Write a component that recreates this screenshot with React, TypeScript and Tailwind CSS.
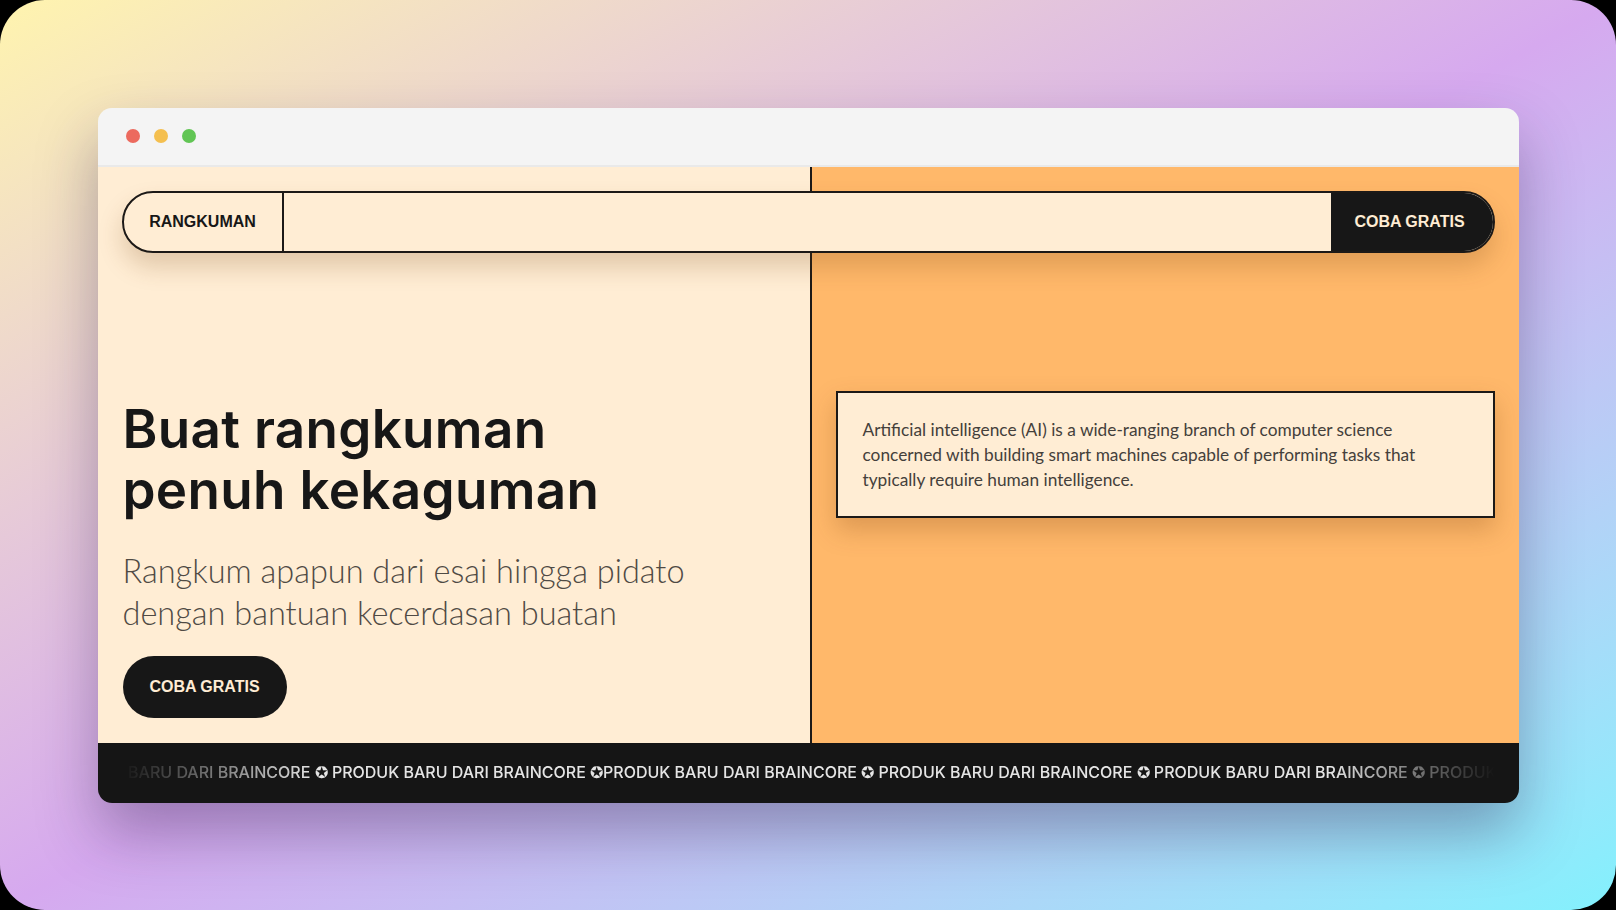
import React from 'react'

const TICKER = 'PRODUK BARU DARI BRAINCORE ✪ PRODUK BARU DARI BRAINCORE ✪PRODUK BARU DARI BRAINCORE ✪ PRODUK BARU DARI BRAINCORE ✪ PRODUK BARU DARI BRAINCORE ✪ PRODUK BARU DARI BRAINCORE ✪ PRODUK BARU DARI BRAINCORE'

const labelFont = "font-['Liberation_Sans',Arial,sans-serif] font-bold text-[16px] uppercase"

const App: React.FC = () => {
	return (
		<div className="w-[1616px] h-[910px] bg-black">
			<div className="w-full h-full rounded-[45px] bg-gradient-to-br from-[#fff4ae] via-[#d6a9ef] to-[#82f1fd] flex items-center justify-center">
				{/* browser window */}
				<div className="w-[1421px] h-[695px] rounded-[14px] overflow-hidden flex flex-col shadow-[0_30px_60px_rgba(40,30,70,0.35)]">
					<div className="h-[59px] shrink-0 bg-[#f4f4f4] border-b-2 border-[#e9e9e9] flex items-center gap-[14px] pl-[28px]">
						<span className="w-[14px] h-[14px] rounded-full bg-[#ec6a5e]" />
						<span className="w-[14px] h-[14px] rounded-full bg-[#f4bf4f]" />
						<span className="w-[14px] h-[14px] rounded-full bg-[#61c554]" />
					</div>

					<div className="relative flex-1 grid grid-cols-[714px_1fr] min-h-0">
						{/* left */}
						<div className="bg-orange-100 border-r-2 border-[#1c1917] flex flex-col justify-end px-[25px] pb-[25px]">
							<h1 className="font-['Inter',sans-serif] font-semibold text-[53px] leading-[61px] tracking-[0.3px] text-neutral-900">
								Buat rangkuman<br />penuh kekaguman
							</h1>
							<p className="mt-[29px] font-['Lato',sans-serif] font-light text-[32.5px] leading-[42px] text-[#4f4a44]">
								Rangkum apapun dari esai hingga pidato<br />dengan bantuan kecerdasan buatan
							</p>
							<button className={`mt-[22px] w-[164px] h-[62px] rounded-full bg-neutral-900 text-orange-100 ${labelFont}`}>
								Coba gratis
							</button>
						</div>

						{/* right */}
						<div className="bg-orange-300 flex items-center px-6">
							<div className="w-full border-2 border-[#1c1917] bg-orange-100 px-[25px] py-6 shadow-[0_12px_24px_rgba(120,60,10,0.25)]">
								<p className="font-['Lato',sans-serif] text-[17.3px] leading-[25px] text-stone-700">
									Artificial intelligence (AI) is a wide-ranging branch of computer science<br />
									concerned with building smart machines capable of performing tasks that<br />
									typically require human intelligence.
								</p>
							</div>
						</div>

						{/* nav pill over both panels */}
						<div className="absolute top-6 left-6 right-6 h-[62px] rounded-full border-2 border-[#1c1917] bg-orange-100 flex overflow-hidden shadow-[0_14px_24px_rgba(120,70,20,0.22)]">
							<div className={`w-[160px] shrink-0 border-r-2 border-[#1c1917] flex items-center justify-center text-neutral-900 ${labelFont}`}>
								Rangkuman
							</div>
							<div className="flex-1" />
							<button className={`w-[162px] shrink-0 bg-neutral-900 text-orange-100 flex items-center justify-center pr-1 ${labelFont}`}>
								Coba gratis
							</button>
						</div>
					</div>

					{/* ticker */}
					<div className="h-[60px] shrink-0 bg-[#151515] flex items-center px-6">
						<div className="flex-1 overflow-hidden [mask-image:linear-gradient(to_right,transparent,black_14%,black_88%,transparent)]">
							<div className="ml-[-65px] mt-[-2px] whitespace-pre font-['Inter',sans-serif] font-medium text-[16px] text-neutral-200">
								{TICKER}
							</div>
						</div>
					</div>
				</div>
			</div>
		</div>
	)
}

export default App
